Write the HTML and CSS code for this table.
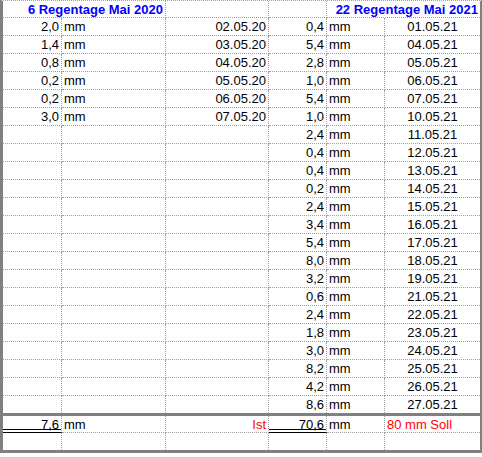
FILE: index.html
```html
<!DOCTYPE html>
<html lang="de">
<head>
<meta charset="utf-8">
<title>Regentage</title>
<link rel="stylesheet" href="styles.css">
</head>
<body>
<div class="sheet">
  <div class="c hd span2 r">6 Regentage Mai 2020</div>
  <div class="c"></div>
  <div class="c"></div>
  <div class="c hd span2 last r">22 Regentage Mai 2021</div>

  <div class="c r">2,0</div><div class="c l">mm</div><div class="c r">02.05.20</div><div class="c r">0,4</div><div class="c l">mm</div><div class="c m last">01.05.21</div>
  <div class="c r">1,4</div><div class="c l">mm</div><div class="c r">03.05.20</div><div class="c r">5,4</div><div class="c l">mm</div><div class="c m last">04.05.21</div>
  <div class="c r">0,8</div><div class="c l">mm</div><div class="c r">04.05.20</div><div class="c r">2,8</div><div class="c l">mm</div><div class="c m last">05.05.21</div>
  <div class="c r">0,2</div><div class="c l">mm</div><div class="c r">05.05.20</div><div class="c r">1,0</div><div class="c l">mm</div><div class="c m last">06.05.21</div>
  <div class="c r">0,2</div><div class="c l">mm</div><div class="c r">06.05.20</div><div class="c r">5,4</div><div class="c l">mm</div><div class="c m last">07.05.21</div>
  <div class="c r">3,0</div><div class="c l">mm</div><div class="c r">07.05.20</div><div class="c r">1,0</div><div class="c l">mm</div><div class="c m last">10.05.21</div>
  <div class="c"></div><div class="c"></div><div class="c"></div><div class="c r">2,4</div><div class="c l">mm</div><div class="c m last">11.05.21</div>
  <div class="c"></div><div class="c"></div><div class="c"></div><div class="c r">0,4</div><div class="c l">mm</div><div class="c m last">12.05.21</div>
  <div class="c"></div><div class="c"></div><div class="c"></div><div class="c r">0,4</div><div class="c l">mm</div><div class="c m last">13.05.21</div>
  <div class="c"></div><div class="c"></div><div class="c"></div><div class="c r">0,2</div><div class="c l">mm</div><div class="c m last">14.05.21</div>
  <div class="c"></div><div class="c"></div><div class="c"></div><div class="c r">2,4</div><div class="c l">mm</div><div class="c m last">15.05.21</div>
  <div class="c"></div><div class="c"></div><div class="c"></div><div class="c r">3,4</div><div class="c l">mm</div><div class="c m last">16.05.21</div>
  <div class="c"></div><div class="c"></div><div class="c"></div><div class="c r">5,4</div><div class="c l">mm</div><div class="c m last">17.05.21</div>
  <div class="c"></div><div class="c"></div><div class="c"></div><div class="c r">8,0</div><div class="c l">mm</div><div class="c m last">18.05.21</div>
  <div class="c"></div><div class="c"></div><div class="c"></div><div class="c r">3,2</div><div class="c l">mm</div><div class="c m last">19.05.21</div>
  <div class="c"></div><div class="c"></div><div class="c"></div><div class="c r">0,6</div><div class="c l">mm</div><div class="c m last">21.05.21</div>
  <div class="c"></div><div class="c"></div><div class="c"></div><div class="c r">2,4</div><div class="c l">mm</div><div class="c m last">22.05.21</div>
  <div class="c"></div><div class="c"></div><div class="c"></div><div class="c r">1,8</div><div class="c l">mm</div><div class="c m last">23.05.21</div>
  <div class="c"></div><div class="c"></div><div class="c"></div><div class="c r">3,0</div><div class="c l">mm</div><div class="c m last">24.05.21</div>
  <div class="c"></div><div class="c"></div><div class="c"></div><div class="c r">8,2</div><div class="c l">mm</div><div class="c m last">25.05.21</div>
  <div class="c"></div><div class="c"></div><div class="c"></div><div class="c r">4,2</div><div class="c l">mm</div><div class="c m last">26.05.21</div>
  <div class="c nb"></div><div class="c nb"></div><div class="c nb"></div><div class="c r nb">8,6</div><div class="c l nb">mm</div><div class="c m last nb">27.05.21</div>

  <div class="sep"></div>

  <div class="c r dbl">7,6</div><div class="c l">mm</div><div class="c r red">Ist</div><div class="c r dbl">70,6</div><div class="c l">mm</div><div class="c l red last">80 mm Soll</div>
  <div class="c nb"></div><div class="c nb"></div><div class="c nb"></div><div class="c nb"></div><div class="c nb"></div><div class="c nb last"></div>
</div>
</body>
</html>
```
FILE: styles.css
```css
html, body {
  margin: 0;
  padding: 0;
  background: #ffffff;
}

.sheet {
  width: 482px;
  box-sizing: border-box;
  border-left: 3px solid #808080;
  border-right: 2px solid #808080;
  border-top: 1px dotted #a0a0a0;
  border-bottom: 3px solid #808080;
  display: grid;
  grid-template-columns: 59px 104px 103px 58px 58px 95px;
  grid-template-rows: 17px repeat(21, 18px) 17px 3px 17px 17px;
  font-family: "Liberation Sans", Arial, sans-serif;
  font-size: 13px;
  color: #000000;
  background: #ffffff;
}

.c {
  box-sizing: border-box;
  border-right: 1px dotted #a0a0a0;
  border-bottom: 1px dotted #a0a0a0;
  display: flex;
  align-items: center;
  white-space: nowrap;
  overflow: hidden;
  line-height: 15px;
}

.c.last {
  border-right: none;
}

.c.nb {
  border-bottom: none;
}

.span2 {
  grid-column: span 2;
}

.hd {
  font-weight: bold;
  color: #0000ff;
}

.r {
  justify-content: flex-end;
  padding-right: 2px;
}

.l {
  justify-content: flex-start;
  padding-left: 2px;
}

.m {
  justify-content: center;
}

.red {
  color: #ff0000;
}

.sep {
  grid-column: 1 / -1;
  background: #808080;
}

.dbl {
  border-bottom: 1px solid #000000;
  background: linear-gradient(#000000, #000000) left bottom 2px / 100% 1px no-repeat;
}
```
